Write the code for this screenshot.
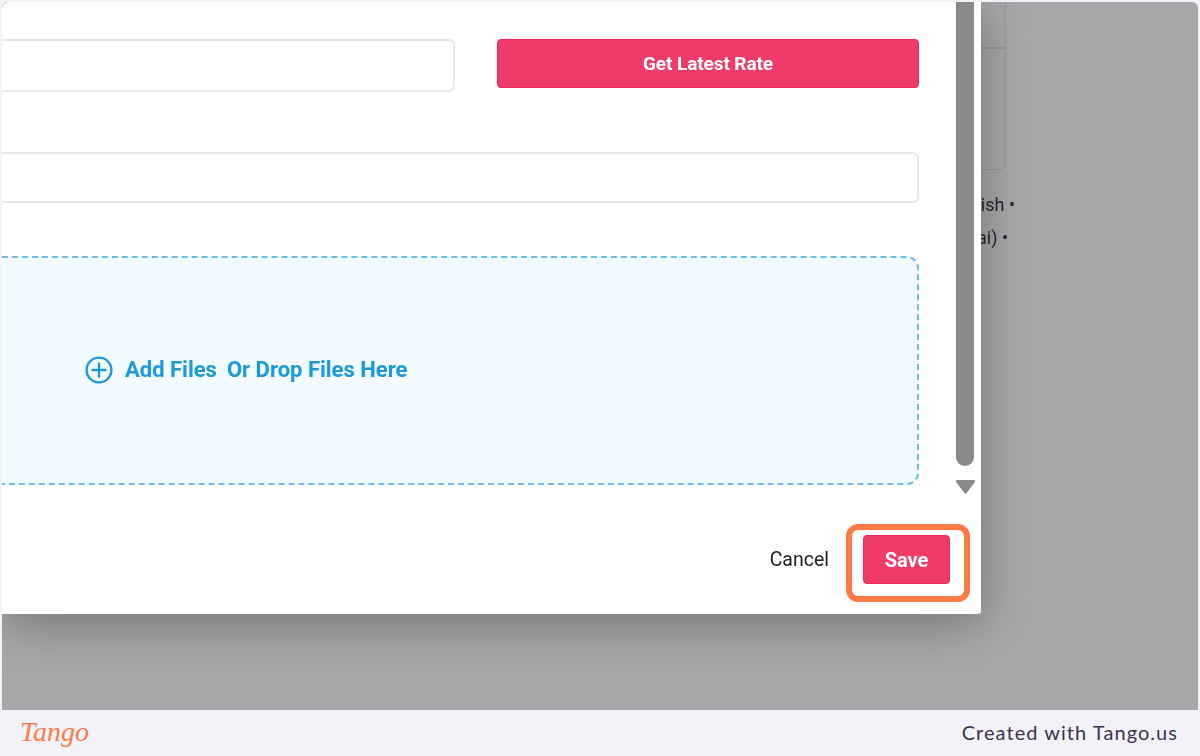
<script lang="ts">
  const languages = ["English •", "(Thai) •"];
</script>

<div class="frame">
  <div class="shot">
    <div class="page">
      <div class="card">
        <div class="card-head"></div>
      </div>
      <div class="langs">
        <span class="lang-a">{languages[0]}</span>
        <span class="lang-b">{languages[1]}</span>
      </div>
    </div>

    <div class="modal">
      <div class="modal-body">
        <div class="form">
          <div class="rate-row">
            <div class="field rate-field"></div>
            <button class="btn rate-btn">Get Latest Rate</button>
          </div>
          <div class="field note-field"></div>
          <div class="dropzone">
            <svg class="plus" viewBox="0 0 28 28" width="28" height="28" fill="none" stroke="#1a9ad6" stroke-width="2.4">
              <circle cx="14" cy="14" r="12.4" />
              <path d="M14 7.5v13M7.5 14h13" stroke-linecap="round" />
            </svg>
            <span class="add">Add Files</span>
            <span class="or">Or Drop Files Here</span>
          </div>
        </div>
        <div class="scrollbar">
          <div class="thumb"></div>
          <svg class="arrow" viewBox="0 0 21 15" width="21" height="15">
            <path d="M2 1h17a1.2 1.2 0 0 1 1 1.900l-8.400 11a1.400 1.400 0 0 1-2.200 0L1 2.900a1.200 1.200 0 0 1 1-1.900z" fill="#8a8a8a" />
          </svg>
        </div>
      </div>
      <div class="modal-footer">
        <span class="cancel">Cancel</span>
        <div class="save-wrap">
          <button class="btn save-btn">Save</button>
          <div class="highlight"></div>
        </div>
      </div>
    </div>
  </div>

  <div class="footer">
    <span class="logo">Tango</span>
    <span class="credit">Created with Tango.us</span>
  </div>
</div>

<style>
  :global(body) {
    margin: 0;
  }

  .frame {
    width: 1200px;
    height: 756px;
    display: flex;
    flex-direction: column;
    box-sizing: border-box;
    padding: 2px 2px 0;
    background: #f3f2f8;
    overflow: hidden;
    font-family: Roboto, "Liberation Sans", sans-serif;
  }

  .shot {
    position: relative;
    flex: 1;
    background: #a6a7a8;
    border-radius: 6px 6px 0 0;
    overflow: hidden;
  }

  .page {
    display: flex;
    flex-direction: column;
    align-items: flex-end;
    padding-right: 192px;
    filter: blur(0.5px);
  }

  .card {
    width: 400px;
    height: 168px;
    box-sizing: border-box;
    border: 1px solid #98999a;
    border-top: none;
    border-radius: 0 0 8px 8px;
  }

  .card-head {
    height: 45px;
    border-bottom: 2px solid #98999a;
  }

  .langs {
    display: flex;
    flex-direction: column;
    align-items: flex-end;
    gap: 12px;
    margin-top: 24px;
    font-size: 18px;
    line-height: 21px;
    color: #24272d;
  }

  .lang-a {
    margin-right: -9px;
  }

  .lang-b {
    margin-right: -2px;
  }

  .modal {
    position: absolute;
    left: 0;
    top: 0;
    width: 979px;
    height: 612px;
    display: flex;
    flex-direction: column;
    background: #fff;
    border-radius: 6px 0 3px 0;
    box-shadow: 0 8px 48px rgba(0, 0, 0, 0.32);
  }

  .modal-body {
    display: flex;
    height: 501px;
  }

  .form {
    flex: 1;
    display: flex;
    flex-direction: column;
    box-sizing: border-box;
    padding: 37px 36px 0 0;
  }

  .rate-row {
    display: flex;
    align-items: flex-start;
    gap: 42px;
  }

  .field {
    box-sizing: border-box;
    border: 2px solid #e8e8e8;
    border-left: none;
    border-radius: 0 6px 6px 0;
    background: #fff;
  }

  .rate-field {
    flex: 1;
    height: 53px;
  }

  .note-field {
    height: 51px;
    margin-top: 60px;
  }

  .btn {
    box-sizing: border-box;
    border: 1px solid #f0245f;
    border-radius: 4px;
    background: #ef3b69;
    color: #fff;
    font-family: inherit;
    font-weight: 700;
    font-size: 19px;
    letter-spacing: -0.1px;
    padding: 0;
  }

  .rate-btn,
  .save-btn,
  .add,
  .or,
  .cancel {
    filter: blur(0.5px);
  }

  .rate-btn {
    width: 422px;
    height: 49px;
  }

  .dropzone {
    display: flex;
    align-items: center;
    height: 229px;
    margin-top: 53px;
    box-sizing: border-box;
    padding-left: 83px;
    padding-bottom: 2px;
    border: 2px dashed #70bbec;
    border-left: none;
    border-radius: 0 12px 12px 0;
    background: #f2fbff;
    color: #1a9ad6;
    font-size: 22px;
    font-weight: 700;
  }

  .plus {
    margin-right: 12px;
  }

  .or {
    margin-left: 10px;
  }

  .scrollbar {
    width: 26px;
    display: flex;
    flex-direction: column;
    align-items: flex-start;
    flex-shrink: 0;
  }

  .thumb {
    width: 18px;
    height: 464px;
    margin-left: 1px;
    box-sizing: border-box;
    border-left: 1px solid #808080;
    background: #8a8a8a;
    border-radius: 0 0 9px 9px;
  }

  .arrow {
    margin-top: 13px;
  }

  .modal-footer {
    flex: 1;
    display: flex;
    justify-content: flex-end;
    align-items: flex-start;
    gap: 34px;
    padding: 32px 31px 0 0;
  }

  .cancel {
    font-size: 19.5px;
    line-height: 49px;
    color: #222;
  }

  .save-wrap {
    position: relative;
    display: flex;
  }

  .save-btn {
    width: 87px;
    height: 49px;
    font-size: 20px;
  }

  .highlight {
    position: absolute;
    left: -17px;
    top: -11px;
    right: -20px;
    bottom: -18px;
    border: 6px solid #ff7a45;
    border-radius: 12px;
  }

  .footer {
    height: 46px;
    flex-shrink: 0;
    display: flex;
    justify-content: space-between;
    align-items: center;
    padding: 0 20px 2px 18px;
    box-sizing: border-box;
  }

  .logo {
    font-family: "Liberation Serif", serif;
    font-style: italic;
    font-size: 28px;
    color: #ff7a45;
  }

  .credit {
    font-family: Lato, sans-serif;
    font-size: 20px;
    letter-spacing: 1.05px;
    color: #3d3251;
  }
</style>
